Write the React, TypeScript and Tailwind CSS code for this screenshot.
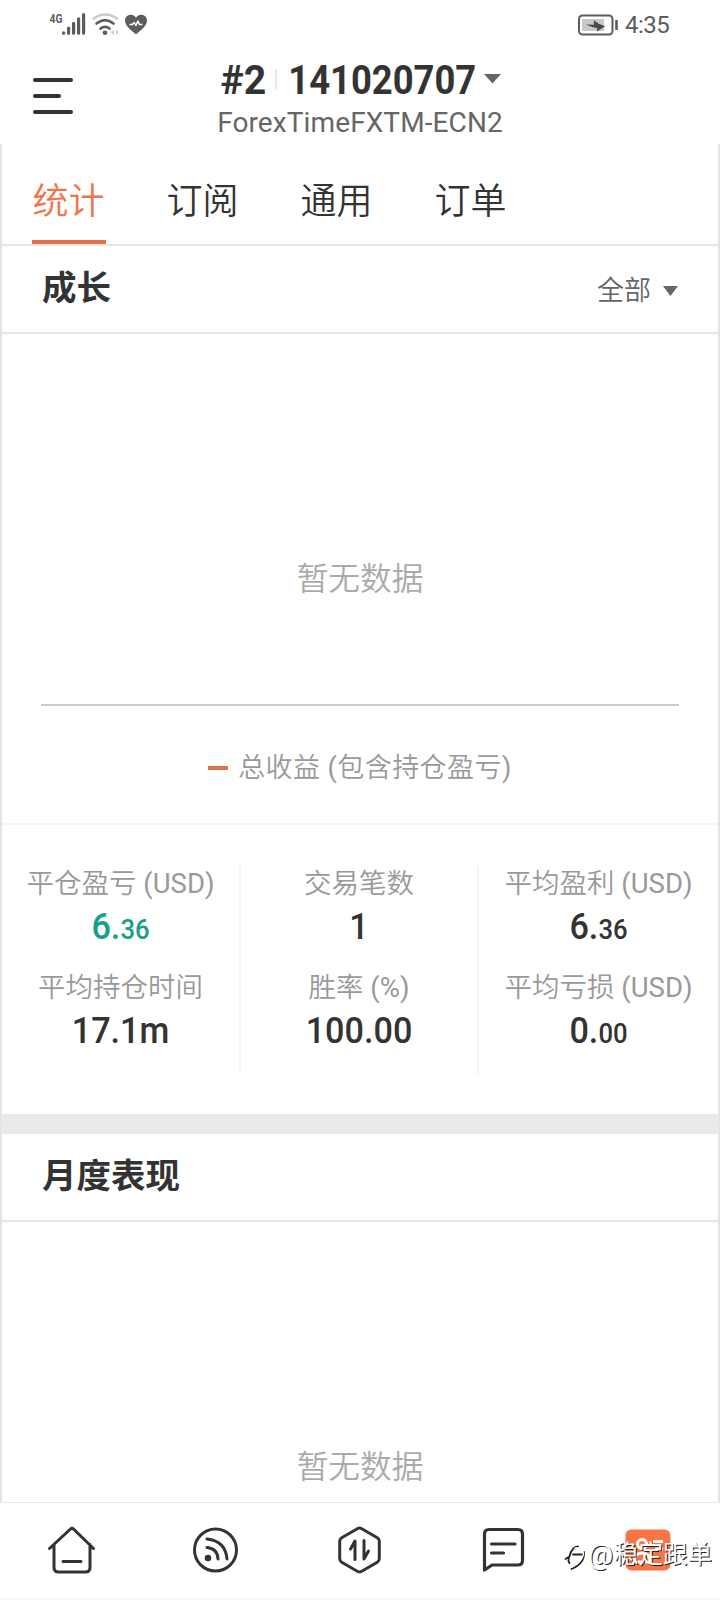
import React, { useState } from 'react';

const TABS = ['统计', '订阅', '通用', '订单'];

const STATS = [
    [
        { label: '平仓盈亏', unit: '(USD)', value: '6.', small: '36', positive: true },
        { label: '平均持仓时间', value: '17.1m' },
    ],
    [
        { label: '交易笔数', value: '1' },
        { label: '胜率', unit: '(%)', value: '100.00' },
    ],
    [
        { label: '平均盈利', unit: '(USD)', value: '6.', small: '36' },
        { label: '平均亏损', unit: '(USD)', value: '0.', small: '00' },
    ],
];

function StatusBar() {
    return (
        <div className="h-12 pl-12 pr-[50px] flex items-center justify-between text-[#5c5c5c]">
            <svg width="104" height="48" viewBox="48 0 104 48" fill="none">
                <text x="49.5" y="22.8" fontSize="13" fontWeight="700" fill="#5c5c5c" textLength="13" lengthAdjust="spacingAndGlyphs">4G</text>
                <g stroke="#5c5c5c" strokeWidth="3.2" strokeLinecap="round">
                    <path d="M63.6 32.8v.4M68.6 28v5.2M73.6 23.4v9.8M78.6 18.8v14.4M83.6 14.6v18.6" />
                </g>
                <path d="M93.5 18.5Q105.5 10.5 117 18.5" stroke="#c9c9c9" strokeWidth="2.6" strokeLinecap="round" />
                <path d="M96.5 23.5Q105 16.8 113.5 23.5M100.5 28.6Q105 25 109.5 28.6" stroke="#5c5c5c" strokeWidth="2.6" strokeLinecap="round" />
                <circle cx="105" cy="32.7" r="2.3" fill="#5c5c5c" />
                <path d="M114 29.5v5.5l-3.5-2.8zM116 29.5v5.5l3-2.8z" fill="#cfcfcf" />
                <path d="M136 34.2c-4-3.2-11-8-11-13.7 0-3.3 2.5-5.8 5.6-5.8 2.3 0 4.3 1.2 5.4 3 1.1-1.8 3.1-3 5.4-3 3.1 0 5.6 2.5 5.6 5.8 0 5.7-7 10.5-11 13.7z" fill="#5c5c5c" />
                <path d="M129.5 24.5h3l1.7-2 1.7 3 2-4.5 1.5 3.5h3" stroke="#fff" strokeWidth="1.5" strokeLinejoin="round" />
            </svg>
            <div className="flex items-center gap-[6px]">
                <svg className="mt-px" width="42" height="24" viewBox="0 0 42 24" fill="none">
                    <rect x="2" y="2.5" width="33.5" height="19" rx="3.5" stroke="#5c5c5c" strokeWidth="2" />
                    <rect x="5" y="6" width="22" height="12" fill="#c8c8c8" />
                    <path d="M9 11.4l8 .4-.3-4.5 5.5 3.7 6 2.2-8.2 5.3.2-3.6-4.400-.6z" fill="#4a4a4a" />
                    <path d="M39.5 7v10" stroke="#5c5c5c" strokeWidth="2.6" />
                </svg>
                <span className="w-[45px] pt-0.5 text-2xl leading-none whitespace-nowrap tracking-[-0.5px]">4:35</span>
            </div>
        </div>
    );
}

function AccountHeader() {
    return (
        <header className="h-24 px-8 flex items-start">
            <button className="pt-[29px] w-[41px]">
                <svg width="41" height="38" viewBox="0 0 41 38" stroke="#333" strokeWidth="4" strokeLinecap="round">
                    <path d="M3 3h36M3 19h24M3 35h36" />
                </svg>
            </button>
            <div className="flex-1 pr-[41px] flex flex-col items-center">
                <div className="h-[60px] pt-[5px] pl-[2px] flex items-center text-[40px] font-bold leading-none text-[#333]">
                    <span className="w-[45px] flex justify-center">
                        <span className="scale-x-[0.98]">#2</span>
                    </span>
                    <span className="ml-[9px] mb-1 w-[2px] h-5 bg-[#e8e8e8]" />
                    <span className="ml-[12px] w-[186px] flex justify-center">
                        <span className="scale-x-[0.91]">141020707</span>
                    </span>
                    <svg className="ml-[9px] mb-1" width="17" height="10" viewBox="0 0 17 10">
                        <path d="M0 0h17L8.5 9.5z" fill="#666" />
                    </svg>
                </div>
                <div className="pt-px text-[28px] leading-7 tracking-[0.1px] text-[#666] whitespace-nowrap">ForexTimeFXTM-ECN2</div>
            </div>
        </header>
    );
}

function SectionHeader({ title, children }: { title: string; children?: React.ReactNode }) {
    return (
        <div className="h-[88px] pl-10 pr-[40px] border-b-2 border-[#e5e5e5] flex items-center justify-between">
            <h2 className="text-[34.5px] leading-none font-bold text-[#333] pb-0.5">{title}</h2>
            {children}
        </div>
    );
}

function BottomNav() {
    return (
        <nav className="relative h-[98px] shrink-0 pb-px bg-white border-t border-[#e8e8e8] border-b-2 border-b-[#f7f7f7] grid grid-cols-5">
            <button className="flex items-center justify-center">
                <svg width="50" height="50" viewBox="0 0 50 50" fill="none" stroke="#333" strokeWidth="3" strokeLinecap="round" strokeLinejoin="round">
                    <path d="M2.5 23.5L23.5 4Q25 2.8 26.5 4L46.5 23.5M7 19.5v23q0 4.5 4.5 4.5h27q4.5 0 4.5-4.5v-23M16 36.5h18" />
                </svg>
            </button>
            <button className="flex items-center justify-center">
                <svg width="48" height="48" viewBox="0 0 48 48" fill="none" stroke="#333" strokeWidth="3" strokeLinecap="round">
                    <circle cx="23.5" cy="24" r="21" />
                    <path d="M15 13q18.5 2 20 20M15 21.5q10.5 1 11 11.5" />
                    <circle cx="16" cy="32" r="3.3" fill="#333" stroke="none" />
                </svg>
            </button>
            <button className="flex items-center justify-center">
                <svg width="50" height="50" viewBox="0 0 50 50" fill="none" stroke="#333" strokeWidth="3" strokeLinecap="round" strokeLinejoin="round">
                    <path d="M22.700 3.5q1.800-1 3.600 0l16 9.300q2 1.200 2 3.400v17.600q0 2.200-2 3.400l-16 9.300q-1.800 1-3.600 0l-16-9.300q-2-1.200-2-3.400V16.200q0-2.200 2-3.400zM15.500 24l4.500-8v18.500M29 15.500V34l4.500-8" />
                </svg>
            </button>
            <button className="flex items-center justify-center">
                <svg width="46" height="46" viewBox="0 0 46 46" fill="none" stroke="#333" strokeWidth="3.2" strokeLinecap="round" strokeLinejoin="round">
                    <path d="M3.5 43V7q0-4.5 4.5-4.5h29q4.5 0 4.5 4.5v26.5q0 4.500-4.5 4.5H11zM10.5 17h23.5M10.5 26h12" />
                </svg>
            </button>
            <button className="flex items-center justify-center">
                <svg width="46" height="42" viewBox="0 0 46 42" fill="none" stroke="#fff" strokeWidth="3">
                    <rect x="0.5" y="0.5" width="45" height="41" rx="6" fill="#f87443" stroke="none" />
                    <circle cx="17" cy="15" r="4.5" />
                    <path d="M9 33q0-9 8-9t8 9zM28 12.5h10M30 20h8" />
                </svg>
            </button>
            {/* author mark over the last item */}
            <div className="absolute right-[8px] top-[34px] flex items-center text-white text-[24.5px] leading-none whitespace-nowrap [text-shadow:1px_1px_0_#222]">
                <svg className="mt-1.5" width="24" height="30" viewBox="0 0 24 30" fill="none" strokeLinecap="round">
                    <path d="M1.5 16l4-2.5Q8 3.5 14 3.5M5.5 13q-2 5 0 7M9 11.5h10M20 9q1 11-12.500 17" stroke="#222" strokeWidth="1.8" />
                    <path d="M11 5q8-1 8.5 6Q18 19 8 24" stroke="#fff" strokeWidth="1.4" />
                </svg>
                <span className="w-[26px] text-[28px] leading-6">@</span>
                <span>稳定跟单</span>
            </div>
        </nav>
    );
}

export default function App() {
    const [tab, setTab] = useState(TABS[0]);

    return (
        <div className="w-[720px] h-[1600px] overflow-hidden flex flex-col bg-white font-[Roboto,'Noto_Sans_CJK_SC',sans-serif]">
            <StatusBar />
            <AccountHeader />

            <main className="flex-1 min-h-0 overflow-hidden border-x-2 border-[#e5e5e5]">
                <div className="h-[102px] pl-[30px] border-b-2 border-[#e5e5e5] flex gap-[60px]">
                    {TABS.map(t => (
                        <button
                            key={t}
                            onClick={() => setTab(t)}
                            className={`w-[74px] pt-5 pr-px text-[36px] leading-none font-[350] whitespace-nowrap border-b-4 ${t === tab ? 'text-[#f2734a] border-[#e5704c]' : 'text-[#333] border-transparent'}`}
                        >
                            {t}
                        </button>
                    ))}
                </div>

                <SectionHeader title="成长">
                    <button className="flex items-center gap-3 text-[27px] leading-none font-[350] text-[#666] pt-1">
                        全部
                        <svg width="15" height="10" viewBox="0 0 15 10">
                            <path d="M0 0h15L7.5 10z" fill="#666" />
                        </svg>
                    </button>
                </SectionHeader>

                <div className="h-[491px] border-b-2 border-[#f5f5f5]">
                    <div className="h-[372px] mx-[39px] pt-[230px] border-b-2 border-[#ccc] text-center text-[31.7px] leading-8 font-[350] text-[#aaa]">暂无数据</div>
                    <div className="h-[122px] pt-0.5 flex items-center justify-center gap-[10px] text-[27px] leading-none font-[350] text-[#999]">
                        <span className="w-5 h-1 bg-[#e5704c]" />
                        <span className="tracking-[0.45px]">
                            总收益 <span className="font-normal">(</span>包含持仓盈亏<span className="font-normal">)</span>
                        </span>
                    </div>
                </div>

                <div className="h-[289px] pt-[41px] grid grid-cols-[239px_238px_239px]">
                    {STATS.map((col, i) => (
                        <div key={i} className="h-[208px] border-r-2 border-[#f5f5f5] last:border-r-0 text-center">
                            {col.map(s => (
                                <div key={s.label} className="h-[104px]">
                                    <div className="h-[36px] text-[27.5px] leading-[36px] font-[350] text-[#999] whitespace-nowrap">
                                        {s.label}
                                        {s.unit && <span className="font-normal"> {s.unit}</span>}
                                    </div>
                                    <div className={`h-[50px] text-[36px] leading-[50px] font-medium scale-x-[0.95] ${s.positive ? 'text-[#16a085]' : 'text-[#333]'}`}>
                                        {s.value}
                                        {s.small && <span className="text-[27px]">{s.small}</span>}
                                    </div>
                                </div>
                            ))}
                        </div>
                    ))}
                </div>

                <div className="h-5 bg-[#e9eaeb]" />
                <SectionHeader title="月度表现" />
                <div className="pt-[230px] text-center text-[31.7px] leading-8 font-[350] text-[#aaa]">暂无数据</div>
            </main>

            <BottomNav />
        </div>
    );
}
